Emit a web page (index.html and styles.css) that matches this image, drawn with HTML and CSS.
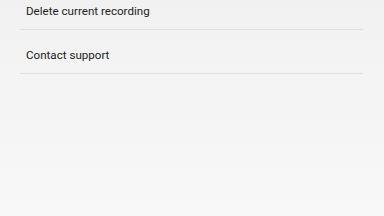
FILE: index.html
```html
<!DOCTYPE html>
<html lang="en">
<head>
    <meta charset="UTF-8">
    <meta name="viewport" content="width=device-width, initial-scale=1.0">
    <title>Settings</title>
    <link rel="stylesheet" href="styles.css">
</head>
<body>
    <ul class="menu">
        <li class="menu-item">Delete current recording</li>
        <li class="menu-item">Contact support</li>
    </ul>
</body>
</html>
```

FILE: styles.css
```css
html, body {
    height: 100%;
}
body {
    font-family: Roboto, 'Noto Sans', sans-serif;
    background: linear-gradient(to bottom, #f1f1f1, #f8f8f8);
    margin: 0;
    padding: 0;
    overflow: hidden;
}
.menu {
    list-style: none;
    margin: -14px 21px 0 20px;
    padding: 0;
}
.menu-item {
    height: 38px;
    padding: 5px 0 0 6px;
    line-height: 40px;
    font-size: 11.6px;
    color: #222;
    border-bottom: 1px solid #e0e0e0;
}
```
